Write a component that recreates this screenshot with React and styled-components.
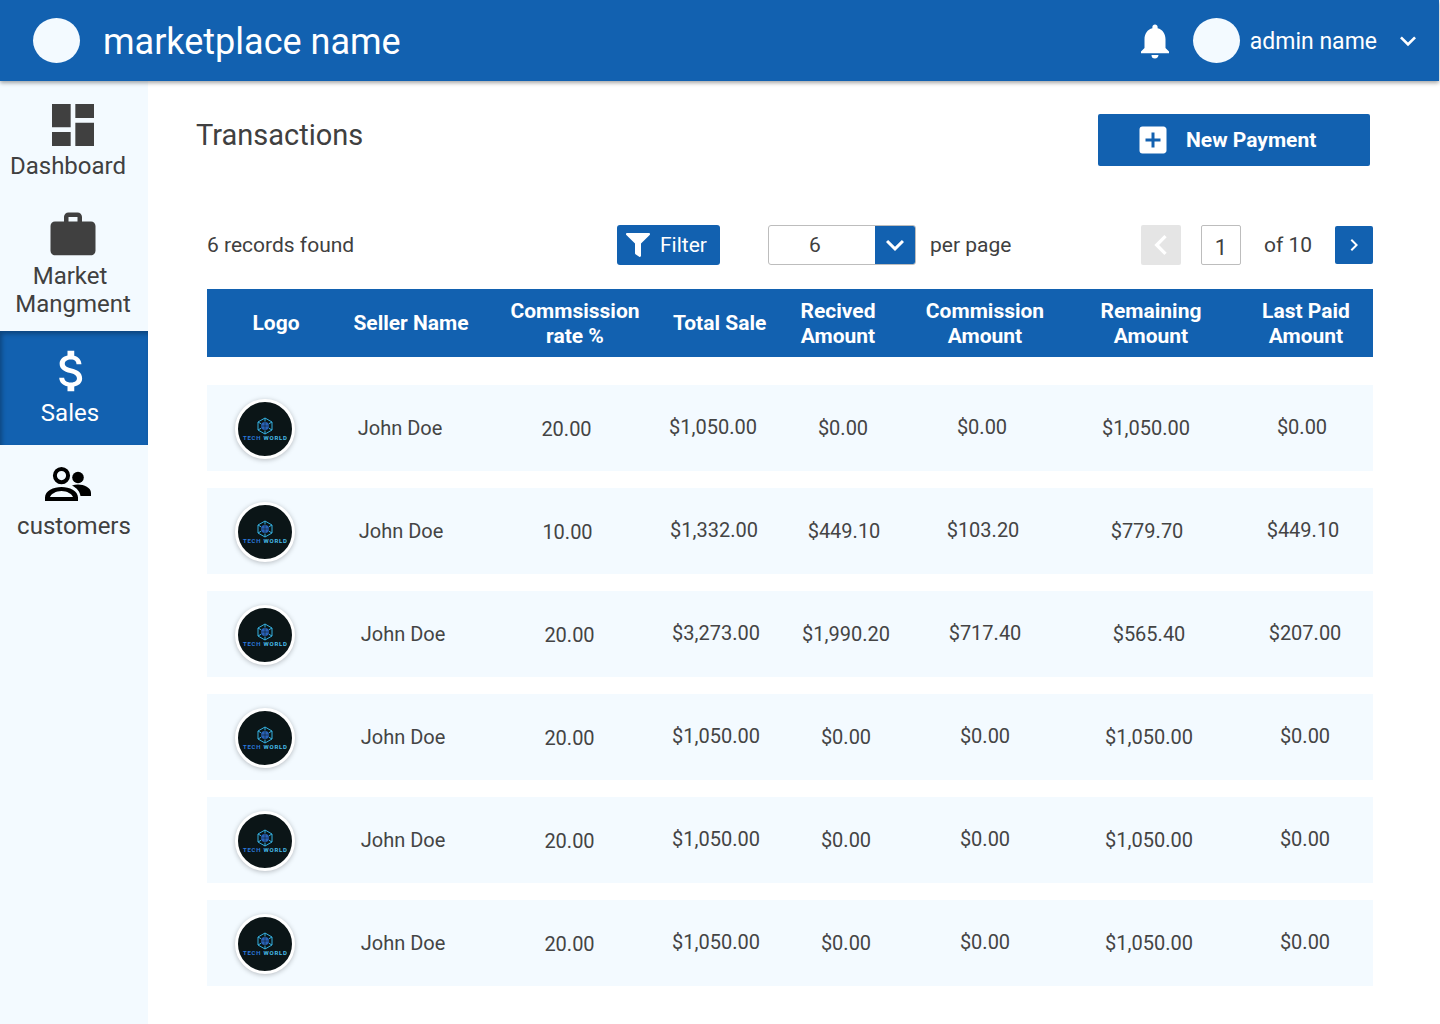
import React from 'react';
import styled, { createGlobalStyle } from 'styled-components';
import { MdNotifications, MdDashboard, MdWork, MdAttachMoney, MdAddBox, MdKeyboardArrowDown, MdChevronLeft, MdChevronRight } from 'react-icons/md';
import { FaFilter } from 'react-icons/fa';

const BLUE = '#1261b0';
const PALE = '#f3faff';
const INK = '#404040';

const GlobalStyle = createGlobalStyle`
  html, body { margin: 0; padding: 0; background: #fff; }
  body { font-family: Roboto, "Liberation Sans", sans-serif; color: ${INK}; }
  * { box-sizing: border-box; }
`;

const Page = styled.div`
  width: 1440px;
  height: 1024px;
  display: flex;
  flex-direction: column;
  overflow: hidden;
`;

const Header = styled.header`
  position: relative;
  z-index: 2;
  width: 1439px;
  height: 81px;
  flex: none;
  display: flex;
  align-items: center;
  background: ${BLUE};
  color: #fff;
  box-shadow: 0 2px 4px rgba(0, 0, 0, 0.35);
  padding-left: 33px;
`;

const Avatar = styled.div`
  width: 47px;
  height: 45px;
  border-radius: 50%;
  background: ${PALE};
  flex: none;
`;

const Brand = styled.div`
  margin: 2px 0 0 23px;
  font-size: 36px;
  line-height: 42px;
`;

const HeaderRight = styled.div`
  margin-left: auto;
  display: flex;
  align-items: center;
  padding-right: 15px;
`;

const Bell = styled(MdNotifications)`
  width: 42px;
  height: 42px;
  margin-right: 17px;
`;

const AdminName = styled.span`
  margin: 2px 0 0 10px;
  font-size: 23px;
  line-height: 28px;
`;

const AdminCaret = styled(MdKeyboardArrowDown)`
  width: 32px;
  height: 32px;
  margin-left: 15px;
`;

const Body = styled.div`
  flex: 1;
  display: flex;
  min-height: 0;
`;

const Sidebar = styled.nav`
  width: 148px;
  flex: none;
  background: ${PALE};
`;

const NavItem = styled.div`
  height: ${({ $h }) => $h}px;
  padding-top: ${({ $top }) => $top}px;
  display: flex;
  flex-direction: column;
  align-items: center;
  background: ${({ $active }) => ($active ? BLUE : 'transparent')};
  color: ${({ $active }) => ($active ? '#fff' : INK)};
  box-shadow: ${({ $active }) => ($active ? 'inset 2px 3px 4px rgba(0, 0, 0, 0.28)' : 'none')};
  font-size: 24px;
  line-height: 28px;
  text-align: center;
`;

const NavIcon = styled.div`
  height: ${({ $size }) => $size}px;
  width: ${({ $size }) => $size}px;
  flex: none;
  display: flex;
  transform: translateX(${({ $shift }) => $shift}px);
  color: ${({ $color }) => $color || 'inherit'};
  svg { width: 100%; height: 100%; display: block; }
`;

const NavLabel = styled.span`
  display: block;
  margin-top: ${({ $gap }) => $gap || 0}px;
  transform: translateX(${({ $shift }) => $shift}px);
`;

const Main = styled.main`
  flex: 1;
  min-width: 0;
  padding: 32px 67px 0 48px;
`;

const TitleRow = styled.div`
  display: flex;
  justify-content: space-between;
  align-items: flex-start;
  height: 112px;
  padding-right: 3px;
`;

const Title = styled.h1`
  margin: 6px 0 0;
  font-size: 29px;
  line-height: 32px;
  font-weight: 400;
`;

const NewPayment = styled.button`
  width: 272px;
  height: 52px;
  margin-top: 1px;
  display: flex;
  align-items: center;
  padding: 0 0 0 37px;
  border: 0;
  border-radius: 2px;
  background: ${BLUE};
  color: #fff;
  font: 700 21px Roboto, sans-serif;
  svg { width: 36px; height: 36px; margin-right: 15px; }
`;

const Toolbar = styled.div`
  height: 40px;
  margin-left: 11px;
  display: flex;
  align-items: center;
  font-size: 21px;
`;

const Records = styled.span`
  width: 410px;
`;

const FilterButton = styled.button`
  width: 103px;
  height: 40px;
  display: flex;
  align-items: center;
  padding: 0 0 0 9px;
  border: 0;
  border-radius: 3px;
  background: ${BLUE};
  color: #fff;
  font: 400 21px Roboto, sans-serif;
  svg { width: 24px; height: 24px; margin-right: 10px; }
`;

const PageSize = styled.div`
  width: 148px;
  height: 40px;
  margin-left: 48px;
  display: flex;
  border: 1px solid #bdbdbd;
  border-radius: 3px;
  overflow: hidden;
`;

const SizeValue = styled.div`
  flex: 1;
  display: flex;
  align-items: center;
  justify-content: center;
  padding-right: 14px;
`;

const SizeCaret = styled.div`
  width: 40px;
  background: ${BLUE};
  color: #fff;
  display: flex;
  align-items: center;
  justify-content: center;
  svg { width: 36px; height: 36px; }
`;

const PerPage = styled.span`
  margin-left: 14px;
  width: 211px;
`;

const PrevButton = styled.div`
  width: 40px;
  height: 40px;
  background: #e5e5e5;
  border-radius: 2px;
  color: #fff;
  display: flex;
  align-items: center;
  justify-content: center;
  svg { width: 40px; height: 40px; }
`;

const PageInput = styled.div`
  width: 40px;
  height: 40px;
  margin-left: 20px;
  padding-top: 4px;
  border: 1px solid #bdbdbd;
  border-radius: 2px;
  font-size: 22px;
  display: flex;
  align-items: center;
  justify-content: center;
`;

const OfTotal = styled.span`
  margin-left: 23px;
  width: 71px;
`;

const NextButton = styled.div`
  width: 38px;
  height: 38px;
  background: ${BLUE};
  border-radius: 2px;
  color: #fff;
  display: flex;
  align-items: center;
  justify-content: center;
  svg { width: 24px; height: 24px; }
`;

const TableHead = styled.div`
  height: 68px;
  margin: 24px 0 28px 11px;
  padding-top: 1px;
  display: grid;
  grid-template-columns: 138px 132px 196px 92px 146px 148px 184px 126px 4px;
  align-items: center;
  background: ${BLUE};
  color: #fff;
  font-size: 21px;
  line-height: 25px;
  font-weight: 700;
  text-align: center;
  white-space: nowrap;
`;

const Rows = styled.div`
  margin-left: 11px;
  display: flex;
  flex-direction: column;
  gap: 17px;
`;

const Row = styled.div`
  height: 86px;
  display: grid;
  grid-template-columns: ${({ $shift }) => 116 + $shift}px 160px 173px 120px 140px 138px 190px 122px;
  align-items: center;
  background: ${PALE};
  font-size: 20px;
  text-align: center;
  color: #444;
`;

const LogoRing = styled.div`
  width: 60px;
  height: 60px;
  margin: 2px 0 0 28px;
  border-radius: 50%;
  border: 3px solid #fff;
  background: #0b1517;
  box-shadow: 0 1px 5px rgba(0, 0, 0, 0.25);
  svg { display: block; width: 100%; height: 100%; }
`;

const Cell = styled.div`
  padding-top: ${({ $drop }) => ($drop > 0 ? $drop * 2 : 0)}px;
  padding-bottom: ${({ $drop }) => ($drop < 0 ? -$drop * 2 : 0)}px;
`;

const PeopleIcon = () => (
  <svg viewBox="0 0 46 34">
    <path fill="currentColor" fillRule="evenodd" d="M16.5 0a8.6 8.6 0 1 1 0 17.2a8.6 8.6 0 0 1 0-17.2zm0 4a4.6 4.6 0 1 0 0 9.2a4.6 4.6 0 0 0 0-9.2z" />
    <path fill="currentColor" fillRule="evenodd" d="M0 34v-3.5c0-6.5 8.5-10.5 16.5-10.5S33 24 33 30.5V34H0zm5-4h23c-1-3-6-6-11.500-6S6 27 5 30z" />
    <circle cx="33" cy="10.500" r="5.800" fill="currentColor" />
    <path fill="currentColor" d="M27 18.500c2-.7 4-1 6-1c6 0 13 3 13 8.500V29H35.500c-.5-4-3.500-8-8.500-10.500z" />
  </svg>
);

const TechWorldLogo = () => (
  <svg viewBox="0 0 54 54">
    <g fill="none" stroke="#35b0e0" strokeWidth="1">
      <path d="M27 16l7 4v8l-7 4l-7-4v-8z" />
      <path d="M27 16v3.500M34 20l-3 1.700M34 28l-3-1.700M27 32v-3.500M20 28l3-1.700M20 20l3 1.700" />
    </g>
    <circle cx="27" cy="24" r="4" fill="#2a62b8" />
    <path d="M23 24h8M27 20v8" stroke="#0b1517" strokeWidth="0.500" />
    <text x="5" y="37.500" fontFamily="Roboto, sans-serif" fontWeight="700" fontSize="6" textLength="44">
      <tspan fill="#2a78dc">TECH </tspan>
      <tspan fill="#48bce8">WORLD</tspan>
    </text>
  </svg>
);

const ROWS = [
  { shift: -3, rate: '20.00', total: '$1,050.00', received: '$0.00', commission: '$0.00', remaining: '$1,050.00', last: '$0.00' },
  { shift: -2, rate: '10.00', total: '$1,332.00', received: '$449.10', commission: '$103.20', remaining: '$779.70', last: '$449.10' },
  { shift: 0, rate: '20.00', total: '$3,273.00', received: '$1,990.20', commission: '$717.40', remaining: '$565.40', last: '$207.00' },
  { shift: 0, rate: '20.00', total: '$1,050.00', received: '$0.00', commission: '$0.00', remaining: '$1,050.00', last: '$0.00' },
  { shift: 0, rate: '20.00', total: '$1,050.00', received: '$0.00', commission: '$0.00', remaining: '$1,050.00', last: '$0.00' },
  { shift: 0, rate: '20.00', total: '$1,050.00', received: '$0.00', commission: '$0.00', remaining: '$1,050.00', last: '$0.00' },
];

export default function App() {
  return (
    <Page>
      <GlobalStyle />
      <Header>
        <Avatar />
        <Brand>marketplace name</Brand>
        <HeaderRight>
          <Bell />
          <Avatar />
          <AdminName>admin name</AdminName>
          <AdminCaret />
        </HeaderRight>
      </Header>
      <Body>
        <Sidebar>
          <NavItem $h={114} $top={16}>
            <NavIcon $size={56} $shift={-1}><MdDashboard /></NavIcon>
            <NavLabel $gap={-1} $shift={-6}>Dashboard</NavLabel>
          </NavItem>
          <NavItem $h={136} $top={13}>
            <NavIcon $size={54} $shift={-1}><MdWork /></NavIcon>
            <NavLabel $shift={-4}>Market</NavLabel>
            <NavLabel $shift={-1}>Mangment</NavLabel>
          </NavItem>
          <NavItem $active $h={114} $top={13}>
            <NavIcon $size={54} $shift={-2}><MdAttachMoney /></NavIcon>
            <NavLabel $gap={1} $shift={-4}>Sales</NavLabel>
          </NavItem>
          <NavItem $h={110} $top={16}>
            <NavIcon $size={46} $shift={-6} $color="#000"><PeopleIcon /></NavIcon>
            <NavLabel $gap={5} $shift={0}>customers</NavLabel>
          </NavItem>
        </Sidebar>
        <Main>
          <TitleRow>
            <Title>Transactions</Title>
            <NewPayment><MdAddBox />New Payment</NewPayment>
          </TitleRow>
          <Toolbar>
            <Records>6 records found</Records>
            <FilterButton><FaFilter />Filter</FilterButton>
            <PageSize>
              <SizeValue>6</SizeValue>
              <SizeCaret><MdKeyboardArrowDown /></SizeCaret>
            </PageSize>
            <PerPage>per page</PerPage>
            <PrevButton><MdChevronLeft /></PrevButton>
            <PageInput>1</PageInput>
            <OfTotal>of 10</OfTotal>
            <NextButton><MdChevronRight /></NextButton>
          </Toolbar>
          <TableHead>
            <span>Logo</span>
            <span>Seller Name</span>
            <span>Commsission<br />rate %</span>
            <span>Total Sale</span>
            <span>Recived<br />Amount</span>
            <span>Commission<br />Amount</span>
            <span>Remaining<br />Amount</span>
            <span>Last Paid<br />Amount</span>
          </TableHead>
          <Rows>
            {ROWS.map((row, i) => (
              <Row key={i} $shift={row.shift}>
                <LogoRing><TechWorldLogo /></LogoRing>
                <Cell $drop={0}>John Doe</Cell>
                <Cell $drop={1}>{row.rate}</Cell>
                <Cell $drop={-1}>{row.total}</Cell>
                <Cell $drop={0}>{row.received}</Cell>
                <Cell $drop={-1}>{row.commission}</Cell>
                <Cell $drop={0}>{row.remaining}</Cell>
                <Cell $drop={-1}>{row.last}</Cell>
              </Row>
            ))}
          </Rows>
        </Main>
      </Body>
    </Page>
  );
}
